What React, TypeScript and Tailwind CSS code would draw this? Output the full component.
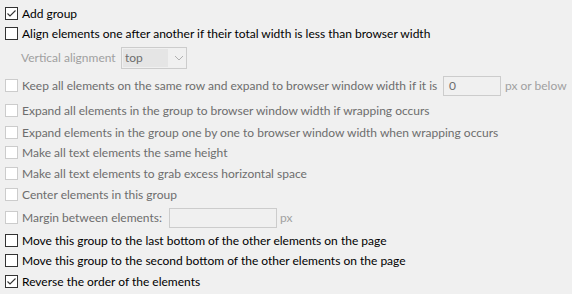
import type { ReactNode } from "react";

function Box({ checked = false, disabled = false }: { checked?: boolean; disabled?: boolean }) {
  return (
    <span
      className={
        "relative w-[13px] h-[13px] shrink-0 border bg-white box-border " +
        (disabled ? "border-[#cccccc]" : "border-[#333333]")
      }
    >
      {checked && (
        <svg width="11" height="11" viewBox="0 0 11 11" className="absolute left-0 top-0">
          <path d="M1.5 5.5 L4 8 L9.5 2.5" fill="none" stroke="#333333" strokeWidth="1.1" />
        </svg>
      )}
    </span>
  );
}

function Row({
  checked,
  disabled,
  label,
  mt,
  labelW = "",
  children,
}: {
  checked?: boolean;
  disabled?: boolean;
  label: string;
  mt: string;
  labelW?: string;
  children?: ReactNode;
}) {
  return (
    <div className={"flex items-center h-[13px] pl-[5px] " + mt}>
      <Box checked={checked} disabled={disabled} />
      <span className={"ml-[4px] whitespace-nowrap " + labelW + (disabled ? " text-[#6d6d6d]" : " text-black")}>
        {label}
      </span>
      {children}
    </div>
  );
}

export default function App() {
  return (
    <div
      className="w-[572px] h-[294px] bg-[#f0f0f0] flex flex-col pt-[7px] text-[12px] leading-none overflow-hidden"
      style={{ fontFamily: '"Segoe UI", Lato, sans-serif' }}
    >
      <Row checked label="Add group" mt="" />
      <Row label="Align elements one after another if their total width is less than browser width" mt="mt-[7px]" />

      <div className="flex items-center h-[22px] mt-[7px] pl-[21px]">
        <span className="text-[#a0a0a0] w-[100px] whitespace-nowrap">Vertical alignment</span>
        <div className="flex items-center h-[22px] w-[66px] border border-[#cccccc] bg-[#f0f0f0] px-[1px]">
          <span className="flex items-center h-[18px] w-[45px] bg-[#e5e5e5] text-[#6d6d6d] pl-[2px]">top</span>
          <svg width="10" height="6" viewBox="0 0 10 6" className="ml-[6px]">
            <path d="M1 1 L5 5 L9 1" fill="none" stroke="#b0b0b0" strokeWidth="1" />
          </svg>
        </div>
      </div>

      <Row
        disabled
        label="Keep all elements on the same row and expand to browser window width if it is"
        labelW="w-[421px]"
        mt="mt-[10px]"
      >
        <div className="h-[20px] w-[58px] border border-[#cccccc] bg-[#f0f0f0] flex items-center pl-[5px] text-[#6d6d6d]">
          0
        </div>
        <span className="ml-[4px] text-[#a0a0a0] whitespace-nowrap">px or below</span>
      </Row>
      <Row disabled label="Expand all elements in the group to browser window width if wrapping occurs" mt="mt-[12px]" />
      <Row disabled label="Expand elements in the group one by one to browser window width when wrapping occurs" mt="mt-[9px]" />
      <Row disabled label="Make all text elements the same height" mt="mt-[7px]" />
      <Row disabled label="Make all text elements to grab excess horizontal space" mt="mt-[8px]" />
      <Row disabled label="Center elements in this group" mt="mt-[8px]" />
      <Row disabled label="Margin between elements:" labelW="w-[147px]" mt="mt-[10px]">
        <div className="h-[20px] w-[108px] border border-[#cccccc] bg-[#f0f0f0]" />
        <span className="ml-[3px] text-[#a0a0a0]">px</span>
      </Row>
      <Row label="Move this group to the last bottom of the other elements on the page" mt="mt-[10px]" />
      <Row label="Move this group to the second bottom of the other elements on the page" mt="mt-[7px]" />
      <Row checked label="Reverse the order of the elements" mt="mt-[8px]" />
    </div>
  );
}
